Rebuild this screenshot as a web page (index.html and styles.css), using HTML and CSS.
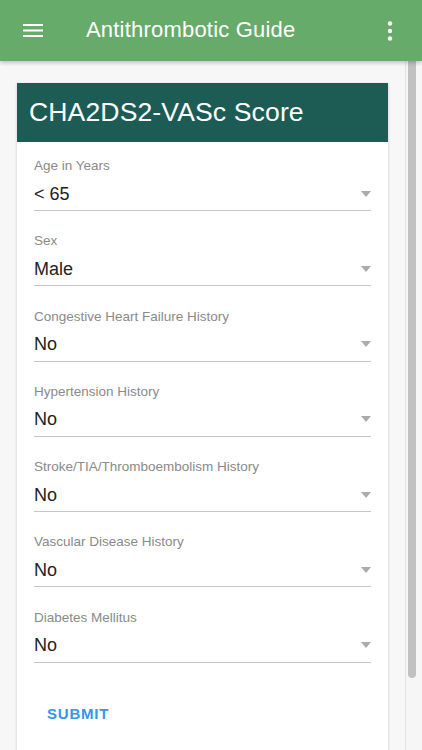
FILE: index.html
```html
<!DOCTYPE html>
<html lang="en">
<head>
<meta charset="utf-8">
<title>Antithrombotic Guide</title>
<link rel="stylesheet" href="styles.css">
</head>
<body>
<div class="app">
  <header class="appbar">
    <button class="icon-btn menu" aria-label="Menu">
      <svg width="20" height="14" viewBox="0 0 20 14"><rect x="0" y="0" width="20" height="2" fill="#fff"/><rect x="0" y="5.5" width="20" height="2" fill="#fff"/><rect x="0" y="11" width="20" height="2" fill="#fff"/></svg>
    </button>
    <h1 class="appbar-title">Antithrombotic Guide</h1>
    <button class="icon-btn more" aria-label="More">
      <svg width="6" height="20" viewBox="0 0 6 20"><circle cx="3" cy="2.5" r="2.2" fill="#fff"/><circle cx="3" cy="10" r="2.2" fill="#fff"/><circle cx="3" cy="17.5" r="2.2" fill="#fff"/></svg>
    </button>
  </header>
  <div class="main">
    <div class="content">
      <section class="card">
        <div class="card-header">CHA2DS2-VASc Score</div>
        <div class="card-body">
          <div class="field"><div class="label">Age in Years</div><div class="select"><span class="value">&lt; 65</span><span class="arrow"></span></div></div>
          <div class="field"><div class="label">Sex</div><div class="select"><span class="value">Male</span><span class="arrow"></span></div></div>
          <div class="field"><div class="label">Congestive Heart Failure History</div><div class="select"><span class="value">No</span><span class="arrow"></span></div></div>
          <div class="field"><div class="label">Hypertension History</div><div class="select"><span class="value">No</span><span class="arrow"></span></div></div>
          <div class="field"><div class="label">Stroke/TIA/Thromboembolism History</div><div class="select"><span class="value">No</span><span class="arrow"></span></div></div>
          <div class="field"><div class="label">Vascular Disease History</div><div class="select"><span class="value">No</span><span class="arrow"></span></div></div>
          <div class="field"><div class="label">Diabetes Mellitus</div><div class="select"><span class="value">No</span><span class="arrow"></span></div></div>
          <button class="submit">SUBMIT</button>
        </div>
      </section>
    </div>
    <div class="scrollbar"><div class="thumb"></div></div>
  </div>
</div>
</body>
</html>
```

FILE: styles.css
```css
* { box-sizing: border-box; }
html, body { margin: 0; padding: 0; }
body {
  font-family: "Liberation Sans", Arial, Helvetica, sans-serif;
  background: #f7f7f7;
  width: 422px;
  height: 750px;
  overflow: hidden;
}
.app {
  display: flex;
  flex-direction: column;
  height: 750px;
}
.appbar {
  position: relative;
  z-index: 2;
  height: 61px;
  flex: 0 0 61px;
  background: #66ab6a;
  display: flex;
  align-items: center;
  box-shadow: 0 2px 4px rgba(0,0,0,0.22);
}
.icon-btn {
  background: none;
  border: 0;
  padding: 0;
  display: flex;
  align-items: center;
  justify-content: center;
}
.menu { margin-left: 23px; width: 20px; height: 20px; }
.more { margin-left: auto; margin-right: 29px; width: 6px; height: 20px; }
.appbar-title {
  margin: 0 0 0 43px;
  font-size: 22px;
  font-weight: normal;
  color: #fff;
  letter-spacing: 0.2px;
  padding-bottom: 2px;
}
.main {
  flex: 1;
  display: flex;
  min-height: 0;
}
.content {
  flex: 1;
  padding: 22px 17px 0 17px;
  overflow: hidden;
}
.scrollbar {
  width: 17px;
  flex: 0 0 17px;
  border-left: 1px solid #e2e2e2;
  background: #f6f6f6;
  padding-left: 2px;
}
.thumb {
  width: 8px;
  height: 617px;
  background: #c1c1c1;
  border-radius: 0 0 4px 4px;
}
.card {
  background: #fff;
  box-shadow: 0 1px 3px rgba(0,0,0,0.18);
}
.card-header {
  background: #1c5c55;
  color: #fff;
  height: 59px;
  display: flex;
  align-items: center;
  padding: 0 12px;
  font-size: 26.6px;
  letter-spacing: 0.1px;
}
.card-body {
  padding: 16px 17px 60px 17px;
}
.field + .field { margin-top: 22.3px; }
.label {
  font-size: 13.5px;
  line-height: 16px;
  color: #8a8a8a;
}
.select {
  margin-top: 8px;
  display: flex;
  align-items: center;
  height: 29px;
  padding-bottom: 5px;
  border-bottom: 1px solid #c6c6c6;
}
.value {
  flex: 1;
  font-size: 18px;
  line-height: 24px;
  color: #222;
}
.arrow {
  width: 0;
  height: 0;
  border-left: 5.5px solid transparent;
  border-right: 5.5px solid transparent;
  border-top: 6px solid #ababab;
  margin-right: 0;
}
.submit {
  margin-top: 42px;
  margin-left: 13px;
  background: none;
  border: 0;
  padding: 0;
  font-family: inherit;
  font-size: 15px;
  line-height: 18px;
  font-weight: bold;
  letter-spacing: 0.8px;
  color: #3397e6;
}
```
